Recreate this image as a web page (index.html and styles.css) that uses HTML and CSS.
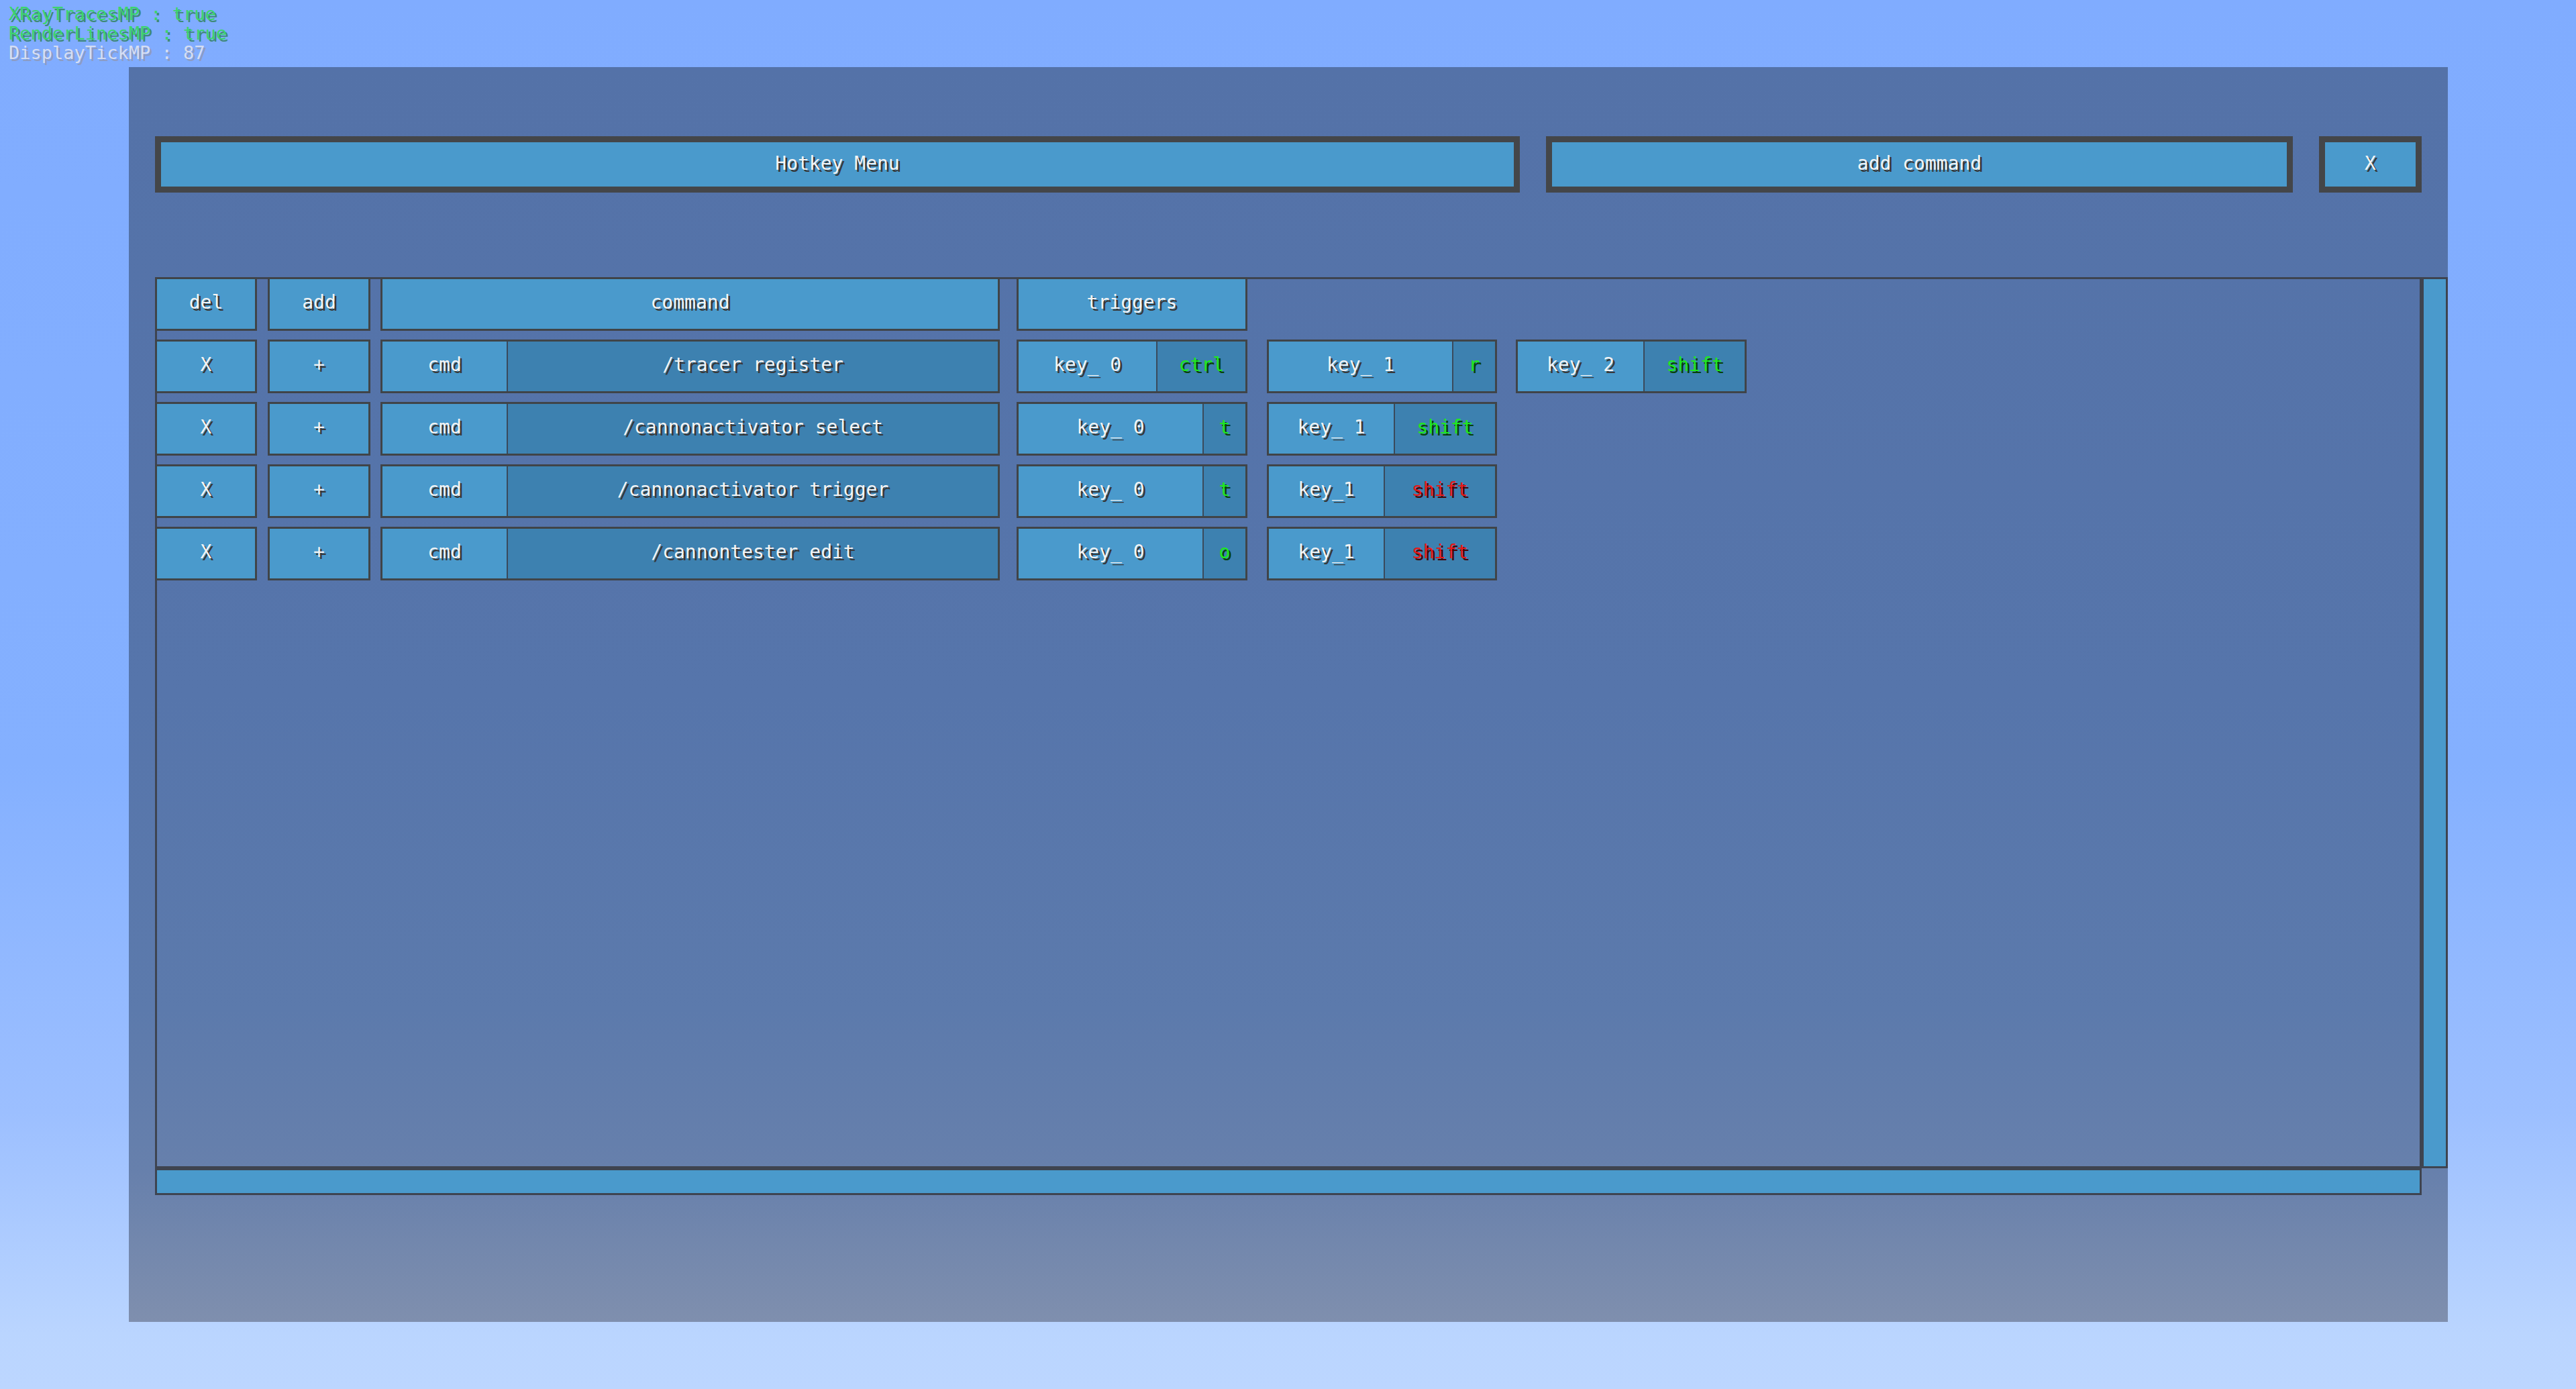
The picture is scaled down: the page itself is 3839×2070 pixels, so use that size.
FILE: index.html
```html
<!DOCTYPE html>
<html>
<head>
<meta charset="utf-8">
<link rel="stylesheet" href="styles.css">
</head>
<body>
<div class="hud">
  <div class="hud-line hud-green">XRayTracesMP : true</div>
  <div class="hud-line hud-green">RenderLinesMP : true</div>
  <div class="hud-line hud-grey">DisplayTickMP : 87</div>
</div>
<div class="panel">
  <div class="topbar">
    <div class="tbtn t-title">Hotkey Menu</div>
    <div class="tbtn t-add">add command</div>
    <div class="tbtn t-close">X</div>
  </div>
  <div class="listwrap">
    <div class="listrow">
      <div class="list">
        <div class="row">
          <div class="cell c-del">del</div>
          <div class="cell c-add">add</div>
          <div class="cell c-cmd">command</div>
          <div class="cell c-trig">triggers</div>
        </div>
        <div class="row">
          <div class="cell c-del">X</div>
          <div class="cell c-add">+</div>
          <div class="grp c-cmd"><div class="part p-lbl">cmd</div><div class="part p-val">/tracer register</div></div>
          <div class="grp c-trig"><div class="part p-key">key_ 0</div><div class="part p-mod m-ctrl green">ctrl</div></div>
          <div class="grp c-k2"><div class="part p-key">key_ 1</div><div class="part p-mod m-one green">r</div></div>
          <div class="grp c-k3"><div class="part p-key">key_ 2</div><div class="part p-mod m-shift green">shift</div></div>
        </div>
        <div class="row">
          <div class="cell c-del">X</div>
          <div class="cell c-add">+</div>
          <div class="grp c-cmd"><div class="part p-lbl">cmd</div><div class="part p-val">/cannonactivator select</div></div>
          <div class="grp c-trig"><div class="part p-key">key_ 0</div><div class="part p-mod m-one green">t</div></div>
          <div class="grp c-k2"><div class="part p-key">key_ 1</div><div class="part p-mod m-shift green">shift</div></div>
        </div>
        <div class="row">
          <div class="cell c-del">X</div>
          <div class="cell c-add">+</div>
          <div class="grp c-cmd"><div class="part p-lbl">cmd</div><div class="part p-val">/cannonactivator trigger</div></div>
          <div class="grp c-trig"><div class="part p-key">key_ 0</div><div class="part p-mod m-one green">t</div></div>
          <div class="grp c-k2"><div class="part p-key">key_1</div><div class="part p-mod m-shiftw red">shift</div></div>
        </div>
        <div class="row">
          <div class="cell c-del">X</div>
          <div class="cell c-add">+</div>
          <div class="grp c-cmd"><div class="part p-lbl">cmd</div><div class="part p-val">/cannontester edit</div></div>
          <div class="grp c-trig"><div class="part p-key">key_ 0</div><div class="part p-mod m-one green">o</div></div>
          <div class="grp c-k2"><div class="part p-key">key_1</div><div class="part p-mod m-shiftw red">shift</div></div>
        </div>
      </div>
      <div class="vscroll"></div>
    </div>
    <div class="hscroll"></div>
  </div>
</div>
</body>
</html>
```
FILE: styles.css
```css
html, body {
  margin: 0;
  padding: 0;
}
body {
  width: 3839px;
  height: 2070px;
  overflow: hidden;
  background: linear-gradient(180deg, #80acff 0%, #84b0ff 55%, #9cbfff 80%, #bad5ff 96%, #bcd6ff 100%);
  font-family: "DejaVu Sans Mono", "Liberation Mono", monospace;
  font-size: 28px;
  color: #f4f4f4;
}
.hud {
  height: 100px;
  box-sizing: border-box;
  padding: 6px 0 0 13px;
}
.hud-line {
  font-size: 27px;
  line-height: 29px;
  white-space: pre;
}
.hud-green {
  color: #3cd46c;
  text-shadow: 3px 3px 0 #3e8a78;
}
.hud-grey {
  color: #d6def2;
  text-shadow: 3px 3px 0 #8c9cc4;
}
.panel {
  margin-left: 192px;
  width: 3456px;
  height: 1870px;
  box-sizing: border-box;
  padding: 103px 0 0 39px;
  background: linear-gradient(180deg, #5472a8 0%, #5675ab 50%, #5c7aac 75%, #6780ac 88%, #7f8fae 100%);
}
.topbar {
  display: flex;
  gap: 39px;
  height: 84px;
}
.tbtn {
  box-sizing: border-box;
  border: 9px solid #444649;
  background: #4a9acc;
  display: flex;
  align-items: center;
  justify-content: center;
  text-shadow: 3px 3px 0 #383838;
  padding-bottom: 4px;
}
.t-title { width: 2034px; }
.t-add { width: 1113px; }
.t-close { width: 153px; }
.listwrap {
  margin-top: 126px;
  width: 3417px;
}
.listrow {
  display: flex;
  height: 1328px;
}
.list {
  width: 3378px;
  box-sizing: border-box;
  box-shadow: inset 0 0 0 3px #3e4450;
  display: flex;
  flex-direction: column;
  gap: 13px;
}
.vscroll {
  width: 39px;
  box-sizing: border-box;
  border: 3px solid #3e4450;
  background: #4a9acc;
}
.hscroll {
  width: 3378px;
  height: 40px;
  box-sizing: border-box;
  border: 3px solid #3e4450;
  background: #4a9acc;
}
.row {
  display: flex;
  height: 80px;
}
.cell, .grp {
  box-sizing: border-box;
  border: 3px solid #404448;
  background: #4a9acc;
}
.cell {
  display: flex;
  align-items: center;
  justify-content: center;
  text-shadow: 3px 3px 0 #383838;
  padding-bottom: 6px;
}
.grp {
  display: flex;
}
.part {
  display: flex;
  align-items: center;
  justify-content: center;
  text-shadow: 3px 3px 0 #383838;
  padding-bottom: 6px;
  box-sizing: border-box;
  white-space: pre;
}
.c-del { width: 152px; }
.c-add { width: 153px; margin-left: 16px; }
.c-cmd { width: 923px; margin-left: 15px; }
.c-trig { width: 344px; margin-left: 25px; }
.c-k2 { width: 343px; margin-left: 29px; }
.c-k3 { width: 344px; margin-left: 28px; }
.p-lbl { width: 185px; }
.p-val {
  flex: 1;
  border-left: 2px solid #3a4a5c;
  background: #3d81b0;
}
.p-key { flex: 1; }
.p-mod {
  border-left: 2px solid #3a4a5c;
  background: #3d81b0;
}
.m-ctrl { width: 133px; }
.m-one { width: 64px; }
.m-shift { width: 151px; }
.m-shiftw { width: 166px; }
.green {
  color: #1ee81e;
  text-shadow: 3px 3px 0 #074207;
}
.red {
  color: #e81818;
  text-shadow: 3px 3px 0 #420606;
}
```
